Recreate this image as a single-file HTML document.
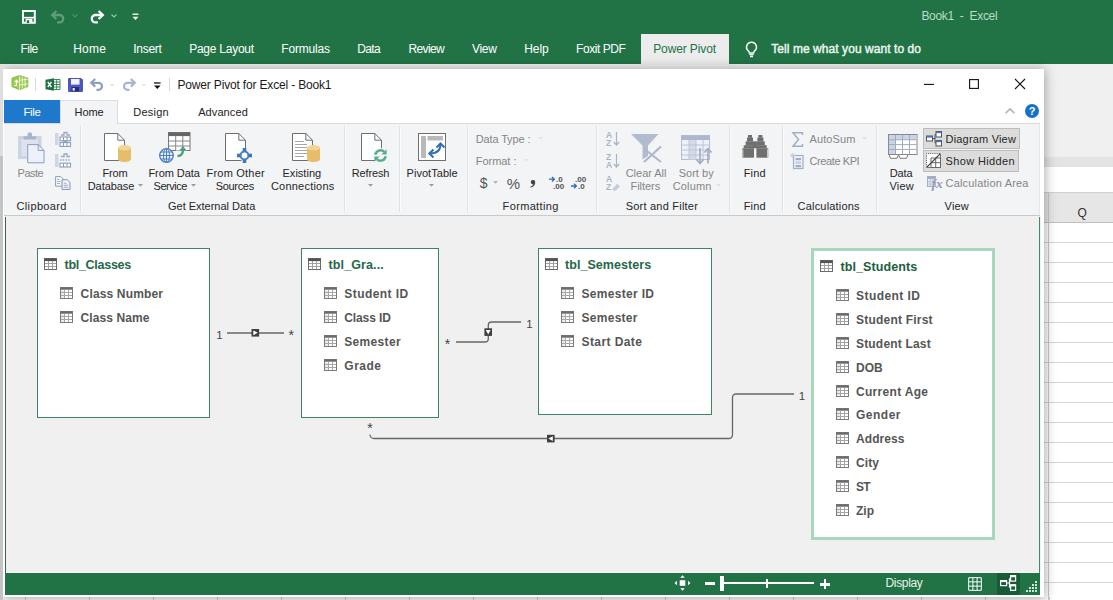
<!DOCTYPE html>
<html><head><meta charset="utf-8"><title>Power Pivot for Excel - Book1</title>
<style>
*{box-sizing:border-box;margin:0;padding:0}
html,body{width:1113px;height:600px;overflow:hidden;background:#fff}
body{position:relative;font-family:"Liberation Sans",sans-serif;font-size:12px;color:#262626}
.a{position:absolute}
.t{position:absolute;white-space:pre}
svg{position:absolute;overflow:visible}
</style></head>
<body>
<div class="a" style="left:0px;top:0px;width:1113px;height:64px;background:#217346;"></div><div class="a" style="left:0px;top:64px;width:1113px;height:93px;background:#f0f0f0;"></div><div class="a" style="left:0px;top:157px;width:1113px;height:10px;background:#e3e3e3;"></div><div class="a" style="left:0px;top:167px;width:1113px;height:25px;background:#ffffff;"></div><div class="a" style="left:0px;top:192px;width:1113px;height:31px;background:#e6e6e6;border-top:1px solid #d0d0d0;border-bottom:1px solid #bfbfbf"></div><div class="a" style="left:0;top:242px;width:1113px;height:1px;background:#d6d6d6"></div><div class="a" style="left:0;top:262px;width:1113px;height:1px;background:#d6d6d6"></div><div class="a" style="left:0;top:282px;width:1113px;height:1px;background:#d6d6d6"></div><div class="a" style="left:0;top:302px;width:1113px;height:1px;background:#d6d6d6"></div><div class="a" style="left:0;top:322px;width:1113px;height:1px;background:#d6d6d6"></div><div class="a" style="left:0;top:342px;width:1113px;height:1px;background:#d6d6d6"></div><div class="a" style="left:0;top:362px;width:1113px;height:1px;background:#d6d6d6"></div><div class="a" style="left:0;top:382px;width:1113px;height:1px;background:#d6d6d6"></div><div class="a" style="left:0;top:402px;width:1113px;height:1px;background:#d6d6d6"></div><div class="a" style="left:0;top:422px;width:1113px;height:1px;background:#d6d6d6"></div><div class="a" style="left:0;top:442px;width:1113px;height:1px;background:#d6d6d6"></div><div class="a" style="left:0;top:462px;width:1113px;height:1px;background:#d6d6d6"></div><div class="a" style="left:0;top:482px;width:1113px;height:1px;background:#d6d6d6"></div><div class="a" style="left:0;top:502px;width:1113px;height:1px;background:#d6d6d6"></div><div class="a" style="left:0;top:522px;width:1113px;height:1px;background:#d6d6d6"></div><div class="a" style="left:0;top:542px;width:1113px;height:1px;background:#d6d6d6"></div><div class="a" style="left:0;top:562px;width:1113px;height:1px;background:#d6d6d6"></div><div class="a" style="left:0;top:582px;width:1113px;height:1px;background:#d6d6d6"></div><div class="a" style="left:1048px;top:192px;width:1px;height:408px;background:#c9c9c9;"></div><div class="a" style="left:25px;top:597px;width:1px;height:3px;background:#cfcfcf;"></div><div class="a" style="left:89px;top:597px;width:1px;height:3px;background:#cfcfcf;"></div><div class="a" style="left:153px;top:597px;width:1px;height:3px;background:#cfcfcf;"></div><div class="a" style="left:217px;top:597px;width:1px;height:3px;background:#cfcfcf;"></div><div class="a" style="left:281px;top:597px;width:1px;height:3px;background:#cfcfcf;"></div><div class="a" style="left:345px;top:597px;width:1px;height:3px;background:#cfcfcf;"></div><div class="a" style="left:409px;top:597px;width:1px;height:3px;background:#cfcfcf;"></div><div class="a" style="left:473px;top:597px;width:1px;height:3px;background:#cfcfcf;"></div><div class="a" style="left:537px;top:597px;width:1px;height:3px;background:#cfcfcf;"></div><div class="a" style="left:601px;top:597px;width:1px;height:3px;background:#cfcfcf;"></div><div class="a" style="left:665px;top:597px;width:1px;height:3px;background:#cfcfcf;"></div><div class="a" style="left:729px;top:597px;width:1px;height:3px;background:#cfcfcf;"></div><div class="a" style="left:793px;top:597px;width:1px;height:3px;background:#cfcfcf;"></div><div class="a" style="left:857px;top:597px;width:1px;height:3px;background:#cfcfcf;"></div><div class="a" style="left:921px;top:597px;width:1px;height:3px;background:#cfcfcf;"></div><div class="a" style="left:985px;top:597px;width:1px;height:3px;background:#cfcfcf;"></div><div class="a" style="left:1049px;top:597px;width:1px;height:3px;background:#cfcfcf;"></div><div class="a" style="left:641px;top:34px;width:88px;height:31px;background:#ececec;"></div><svg style="left:22px;top:10px" width="14" height="14" viewBox="0 0 14 14"><path d="M1 1h11.800v11.800H1z" fill="none" stroke="#fff" stroke-width="2"/><path d="M1 7.600h11.800" stroke="#fff" stroke-width="1.500"/><rect x="3.600" y="8.600" width="6.800" height="4.200" fill="#fff"/><rect x="4.800" y="10.200" width="2.400" height="2.800" fill="#217346"/></svg><svg style="left:50px;top:10px" width="16" height="14" viewBox="0 0 16 14"><path d="M2.200 5h7.300a3.700 3.700 0 0 1 0 7.400H7.200" fill="none" stroke="#5f9d7c" stroke-width="2.300"/><path d="M6.400 1 2.200 5l4.200 4" fill="none" stroke="#5f9d7c" stroke-width="2.300"/></svg><svg style="left:72px;top:14px" width="6" height="4" viewBox="0 0 6 4"><path d="M.5.5 3 3 5.500.5" fill="none" stroke="#4f8f6d" stroke-width="1.100"/></svg><svg style="left:89px;top:10px" width="16" height="14" viewBox="0 0 16 14"><path d="M13.800 5H6.500a3.700 3.700 0 0 0 0 7.400h2.300" fill="none" stroke="#fff" stroke-width="2.300"/><path d="M9.600 1l4.200 4-4.200 4" fill="none" stroke="#fff" stroke-width="2.300"/></svg><svg style="left:111px;top:14px" width="6" height="4" viewBox="0 0 6 4"><path d="M.5.5 3 3 5.500.5" fill="none" stroke="#9cc4ad" stroke-width="1.100"/></svg><svg style="left:132px;top:13px" width="7" height="8" viewBox="0 0 7 8"><path d="M.5 1.2h6" stroke="#fff" stroke-width="1.3"/><path d="M.5 3.8h6L3.5 7z" fill="#fff"/></svg><svg style="left:745px;top:41px" width="13" height="17" viewBox="0 0 13 17"><path d="M6.5 1.2a4.9 4.9 0 0 0-3 8.8c.6.6.9 1.2.9 2h4.2c0-.8.3-1.4.9-2a4.9 4.9 0 0 0-3-8.800z" fill="none" stroke="#fff" stroke-width="1.500"/><path d="M4.400 13.600h4.200M5 15.500h3" stroke="#fff" stroke-width="1.300"/></svg><div class="a" style="left:3px;top:69px;width:1041px;height:528px;background:#fff;box-shadow:0 1px 11px 1px rgba(0,0,0,.34)"></div><div class="a" style="left:0px;top:64px;width:3px;height:92px;background:#dedede;"></div><div class="a" style="left:0px;top:156px;width:3px;height:444px;background:#c4c4c4;"></div><div class="a" style="left:4px;top:100px;width:56px;height:23px;background:#1e78cc;"></div><div class="a" style="left:60px;top:100px;width:58px;height:24px;background:#f3f4f6;border:1px solid #dcdde0;border-bottom:none"></div><div class="a" style="left:4px;top:123px;width:1036px;height:93px;background:#f3f4f6;border-top:1px solid #d9dadc;border-bottom:1px solid #c9cacc"></div><div class="a" style="left:4px;top:123px;width:56px;height:1px;background:#d9dadc;"></div><div class="a" style="left:61px;top:123px;width:56px;height:1px;background:#f3f4f6;"></div><div class="a" style="left:5px;top:216px;width:1036px;height:356px;background:#f0f0f0;"></div><div class="a" style="left:5px;top:572px;width:1035px;height:1px;background:#f2f8f4;"></div><div class="a" style="left:5px;top:217px;width:1px;height:356px;background:#3a5f4e;"></div><div class="a" style="left:1039px;top:217px;width:1px;height:356px;background:#3d8a63;"></div><div class="a" style="left:5px;top:573px;width:1035px;height:22px;background:#217346;"></div><div class="a" style="left:997px;top:573px;width:23px;height:22px;background:#185c37;"></div><div class="a" style="left:80px;top:126px;width:1px;height:86px;background:#e1e2e5;"></div><div class="a" style="left:81px;top:126px;width:1px;height:86px;background:#f9fafb;"></div><div class="a" style="left:344px;top:126px;width:1px;height:86px;background:#e1e2e5;"></div><div class="a" style="left:345px;top:126px;width:1px;height:86px;background:#f9fafb;"></div><div class="a" style="left:399px;top:126px;width:1px;height:86px;background:#e1e2e5;"></div><div class="a" style="left:400px;top:126px;width:1px;height:86px;background:#f9fafb;"></div><div class="a" style="left:467px;top:126px;width:1px;height:86px;background:#e1e2e5;"></div><div class="a" style="left:468px;top:126px;width:1px;height:86px;background:#f9fafb;"></div><div class="a" style="left:596px;top:126px;width:1px;height:86px;background:#e1e2e5;"></div><div class="a" style="left:597px;top:126px;width:1px;height:86px;background:#f9fafb;"></div><div class="a" style="left:729px;top:126px;width:1px;height:86px;background:#e1e2e5;"></div><div class="a" style="left:730px;top:126px;width:1px;height:86px;background:#f9fafb;"></div><div class="a" style="left:782px;top:126px;width:1px;height:86px;background:#e1e2e5;"></div><div class="a" style="left:783px;top:126px;width:1px;height:86px;background:#f9fafb;"></div><div class="a" style="left:876px;top:126px;width:1px;height:86px;background:#e1e2e5;"></div><div class="a" style="left:877px;top:126px;width:1px;height:86px;background:#f9fafb;"></div><div class="a" style="left:1039px;top:124px;width:1px;height:91px;background:#e6e7e9;"></div><svg style="left:924px;top:78px" width="11" height="11" viewBox="0 0 11 11"><path d="M0 6.4h10" stroke="#111" stroke-width="1.1"/></svg><svg style="left:969px;top:79px" width="10" height="10" viewBox="0 0 10 10"><rect x=".6" y=".6" width="8.8" height="8.8" fill="none" stroke="#111" stroke-width="1.1"/></svg><svg style="left:1015px;top:79px" width="10" height="10" viewBox="0 0 10 10"><path d="M0 0l10 10M10 0L0 10" stroke="#111" stroke-width="1.1"/></svg><svg style="left:1005px;top:108px" width="10" height="6" viewBox="0 0 10 6"><path d="M.6 5.2 5 .9l4.400 4.300" fill="none" stroke="#b2b2b2" stroke-width="1.600"/></svg><div class="a" style="left:1025px;top:104px;width:14px;height:14px;border-radius:7px;background:#1672c4;color:#fff;font:700 11px/14px 'Liberation Sans',sans-serif;text-align:center">?</div><svg style="left:11px;top:75px" width="18" height="15" viewBox="0 0 18 15"><path d="M8.500 .5 16.800 3.200v8.400L8.500 14.500 1 11.600V3.200z" fill="#9ccc50" stroke="#7ab532" stroke-width=".9"/><path d="M8.500 .5v14" stroke="#e8f5d0" stroke-width=".9"/><path d="M8.500 5.200l8.300-1M8.500 9.800l8.300-.8M11.300 1.500v12M14.100 2.400v10.200" stroke="#f3fae6" stroke-width=".9" fill="none"/><path d="M3.300 10.500h2.200V5.500M3.800 7.200l1.700-1.900 1.700 1.900" stroke="#fff" stroke-width="1.200" fill="none"/></svg><div class="a" style="left:35px;top:78px;width:1px;height:13px;background:#d8d8d8;"></div><svg style="left:45px;top:78px" width="16" height="13" viewBox="0 0 16 13"><path d="M7.500 1.500h7.500v10H7.500z" fill="#fff" stroke="#2a7a4b" stroke-width=".9"/><path d="M9 4h6M9 6.500h6M9 9h6M11.700 1.500v10" stroke="#2a7a4b" stroke-width=".9"/><path d="M.5 1.800 9 .2v12.600L.5 11.200z" fill="#1f7244"/><path d="M2.800 4l3.600 5M6.400 4 2.800 9" stroke="#fff" stroke-width="1.300"/></svg><svg style="left:68px;top:78px" width="15" height="14" viewBox="0 0 15 14"><path d="M.6.600h12.600l1.200 1.200v11.600H.6z" fill="#4f58c2" stroke="#3a41a6" stroke-width=".9"/><rect x="3" y="1" width="8.500" height="5.600" fill="#f2f4fc"/><rect x="3.600" y="9" width="7.400" height="4.400" fill="#252b78"/><rect x="4.600" y="10" width="2.200" height="2.600" fill="#e8ebf8"/></svg><svg style="left:89px;top:78px" width="16" height="13" viewBox="0 0 16 13"><path d="M2.200 4.800h7.300a3.500 3.500 0 0 1 0 7h-2" fill="none" stroke="#8e9fc2" stroke-width="2.200"/><path d="M6.200 1 2.200 4.800l4 3.800" fill="none" stroke="#8e9fc2" stroke-width="2.200"/></svg><svg style="left:110px;top:84px" width="4" height="3" viewBox="0 0 4 3"><path d="M0 0h4L2 2.500z" fill="#d9dce3"/></svg><svg style="left:121px;top:78px" width="16" height="13" viewBox="0 0 16 13"><path d="M13.800 4.800H6.500a3.500 3.500 0 0 0 0 7h2" fill="none" stroke="#a9b5ce" stroke-width="2.200"/><path d="M9.800 1l4 3.800-4 3.800" fill="none" stroke="#a9b5ce" stroke-width="2.200"/></svg><svg style="left:142px;top:84px" width="4" height="3" viewBox="0 0 4 3"><path d="M0 0h4L2 2.500z" fill="#e1e3e8"/></svg><svg style="left:154px;top:82px" width="7" height="8" viewBox="0 0 7 8"><path d="M0 1h6.600" stroke="#111" stroke-width="1.300"/><path d="M0 3.400h6.600L3.300 7z" fill="#111"/></svg><div class="a" style="left:169px;top:78px;width:1px;height:13px;background:#d8d8d8;"></div><svg style="left:18px;top:133px" width="27" height="31" viewBox="0 0 27 31"><rect x="0" y="3" width="23.500" height="23" fill="#cdd4e4"/><rect x="3.500" y="6" width="16.500" height="17" fill="#dde2ee"/><path d="M5.500 6.500V3.200h4V1.500a2.300 2.300 0 0 1 4.600 0v1.700h4v3.300z" fill="#a9b4cc"/><path d="M9.700 11.600h10.500l5.800 5.800v12.400H9.700z" fill="#edf1fb" stroke="#8d9dbc" stroke-width="1"/><path d="M20.200 11.600v5.800h5.800" fill="none" stroke="#8d9dbc" stroke-width="1"/></svg><svg style="left:55px;top:131px" width="16" height="16" viewBox="0 0 16 16"><rect x="0" y="2" width="3.500" height="12" fill="#cfd5e4"/><path d="M6 4h3V1.500h3V4h3" fill="none" stroke="#9aa8c4" stroke-width="1.300"/><rect x="5" y="6" width="10.500" height="3.800" fill="#fff" stroke="#8d9dbc" stroke-width="1.100"/><rect x="5" y="11.600" width="10.500" height="3.800" fill="#fff" stroke="#8d9dbc" stroke-width="1.100"/><path d="M8.500 6v3.800M12 6v3.800M8.500 11.600v3.800M12 11.600v3.800" stroke="#8d9dbc" stroke-width="1"/><path d="M7 9.800h6.500l-3.200 1.800z" fill="#8d9dbc"/></svg><svg style="left:55px;top:153px" width="16" height="15" viewBox="0 0 16 15"><rect x="0" y="1" width="3.500" height="13" fill="#cfd5e4"/><path d="M6 3.500h3V1h3v2.500h3" fill="none" stroke="#9aa8c4" stroke-width="1.300"/><path d="M5 7h10.500" stroke="#9aa8c4" stroke-width="1.300" stroke-dasharray="1.500 1.200"/><rect x="5" y="10.200" width="10.500" height="3.800" fill="#fff" stroke="#8d9dbc" stroke-width="1.100"/><path d="M8.500 10.200v3.800M12 10.200v3.800" stroke="#8d9dbc" stroke-width="1"/></svg><svg style="left:55px;top:176px" width="16" height="14" viewBox="0 0 16 14"><path d="M.6.600h5.200l2.200 2.200v7.400H.6z" fill="#f7f8fc" stroke="#8d9dbc" stroke-width="1"/><path d="M2 3.500h2.500M2 5.500h3.500M2 7.500h3" stroke="#9aa8c4" stroke-width=".9"/><path d="M7 3.800h5.400l2.600 2.600v7H7z" fill="#f7f8fc" stroke="#7f90b2" stroke-width="1"/><path d="M8.600 7.200h3M8.600 9.200h4.600M8.600 11.200h4.600" stroke="#8d9dbc" stroke-width=".9"/></svg><svg style="left:104px;top:133px" width="21" height="28" viewBox="0 0 21 28"><path d="M.5.5h13.300l6.700 6.700v20.300H.5z" fill="#fff" stroke="#6f6f6f" stroke-width="1"/><path d="M13.800.5v6.700h6.700" fill="none" stroke="#6f6f6f" stroke-width="1"/></svg><svg style="left:118px;top:145px" width="13" height="17" viewBox="0 0 13 17"><path d="M0 2.800v11.400c0 1.500 2.900 2.800 6.500 2.800s6.500-1.300 6.500-2.800V2.800z" fill="#e8bd6a"/><ellipse cx="6.500" cy="2.800" rx="6.500" ry="2.800" fill="#f3d596"/></svg><svg style="left:138px;top:184px" width="5" height="3" viewBox="0 0 5 3"><path d="M0 0h5L2.500 2.800z" fill="#9b9b9b"/></svg><svg style="left:168px;top:132px" width="23" height="19" viewBox="0 0 23 19"><rect x=".5" y=".5" width="21.500" height="18" fill="#fff" stroke="#777" stroke-width="1"/><rect x=".5" y=".5" width="21.500" height="3.600" fill="#666"/><path d="M.5 9h21.500M.5 14h21.500M7.700 4v14.500M14.800 4v14.500" stroke="#888" stroke-width="1"/></svg><svg style="left:176px;top:145px" width="12" height="12" viewBox="0 0 12 12"><rect x="0" y="5.500" width="11" height="6.500" fill="#f3f4f6"/><path d="M1.500 11c3.500 0 5.500-2 5.500-6.500" fill="none" stroke="#4a9f7e" stroke-width="2.300"/><path d="M3.200 5.800 7 1l3.800 4.800z" fill="#4a9f7e"/></svg><svg style="left:159px;top:148px" width="15" height="15" viewBox="0 0 15 15"><circle cx="7.500" cy="7.500" r="6.800" fill="#eaf2fb" stroke="#4a7fc0" stroke-width="1.300"/><ellipse cx="7.500" cy="7.500" rx="3" ry="6.800" fill="none" stroke="#4a7fc0" stroke-width="1"/><path d="M.7 7.500h13.600M1.800 4h11.400M1.800 11h11.400M7.500.7v13.600" stroke="#4a7fc0" stroke-width="1"/></svg><svg style="left:191px;top:184px" width="5" height="3" viewBox="0 0 5 3"><path d="M0 0h5L2.500 2.800z" fill="#9b9b9b"/></svg><svg style="left:225px;top:133px" width="21" height="28" viewBox="0 0 21 28"><path d="M.5.5h13.300l6.700 6.700v20.300H.5z" fill="#fff" stroke="#6f6f6f" stroke-width="1"/><path d="M13.800.5v6.700h6.700" fill="none" stroke="#6f6f6f" stroke-width="1"/></svg><svg style="left:237px;top:148px" width="15" height="15" viewBox="0 0 15 15"><circle cx="7.500" cy="7.500" r="6" fill="#f3f4f6"/><circle cx="7.500" cy="7.500" r="3.900" fill="#fff" stroke="#4a80c2" stroke-width="2"/><rect x="5.700" y="0" width="3.600" height="3.400" fill="#3d78bd"/><rect x="5.700" y="11.600" width="3.600" height="3.400" fill="#3d78bd"/><rect x="0" y="5.700" width="3.400" height="3.600" fill="#3d78bd"/><rect x="11.600" y="5.700" width="3.400" height="3.600" fill="#3d78bd"/></svg><svg style="left:292px;top:133px" width="21" height="28" viewBox="0 0 21 28"><path d="M.5.5h13.300l6.700 6.700v20.300H.5z" fill="#fff" stroke="#6f6f6f" stroke-width="1"/><path d="M13.800.5v6.700h6.700" fill="none" stroke="#6f6f6f" stroke-width="1"/><path d="M3 8.500h9M3 11.500h12M3 14.500h12M3 17.500h12M3 20.500h12M3 23.500h9" stroke="#a6a6a6" stroke-width="1"/></svg><svg style="left:307px;top:145px" width="13" height="17" viewBox="0 0 13 17"><path d="M0 2.800v11.400c0 1.500 2.900 2.800 6.500 2.800s6.500-1.300 6.500-2.800V2.800z" fill="#e8bd6a"/><ellipse cx="6.500" cy="2.800" rx="6.500" ry="2.800" fill="#f3d596"/></svg><svg style="left:361px;top:133px" width="21" height="28" viewBox="0 0 21 28"><path d="M.5.5h13.300l6.700 6.700v20.300H.5z" fill="#fff" stroke="#6f6f6f" stroke-width="1"/><path d="M13.800.5v6.700h6.700" fill="none" stroke="#6f6f6f" stroke-width="1"/></svg><svg style="left:373px;top:148px" width="15" height="15" viewBox="0 0 15 15"><circle cx="7.500" cy="7.500" r="7.400" fill="#f3f4f6"/><path d="M2.300 6.800a5.300 5.300 0 0 1 9-2.900" fill="none" stroke="#5aab8c" stroke-width="2.400"/><path d="M13.600 1.200v5.200H8.400z" fill="#5aab8c"/><path d="M12.700 8.200a5.300 5.300 0 0 1-9 2.900" fill="none" stroke="#5aab8c" stroke-width="2.400"/><path d="M1.400 13.800V8.600h5.200z" fill="#5aab8c"/></svg><svg style="left:368px;top:184px" width="5" height="3" viewBox="0 0 5 3"><path d="M0 0h5L2.500 2.800z" fill="#9b9b9b"/></svg><svg style="left:418px;top:133px" width="28" height="28" viewBox="0 0 28 28"><rect x=".5" y=".5" width="27" height="27" fill="#fff" stroke="#6f6f6f" stroke-width="1"/><rect x="3" y="3" width="5" height="22" fill="#b9b9b9"/><rect x="9.500" y="3" width="15.500" height="4.500" fill="#b9b9b9"/><path d="M12 20.500c7 0 10.500-3 10.500-9.500" fill="none" stroke="#2f6fb5" stroke-width="2"/><path d="M15.500 16.500 11.300 20.500l4.200 4M18.500 14.500l4-4 4 4" fill="none" stroke="#2f6fb5" stroke-width="2"/></svg><svg style="left:429px;top:184px" width="5" height="3" viewBox="0 0 5 3"><path d="M0 0h5L2.500 2.800z" fill="#9b9b9b"/></svg><svg style="left:538px;top:137px" width="5" height="3" viewBox="0 0 5 3"><path d="M0 0h5L2.500 2.800z" fill="#e3e5e9"/></svg><svg style="left:524px;top:159px" width="5" height="3" viewBox="0 0 5 3"><path d="M0 0h5L2.500 2.800z" fill="#e3e5e9"/></svg><svg style="left:493px;top:181px" width="5" height="3" viewBox="0 0 5 3"><path d="M0 0h5L2.500 2.800z" fill="#b5b5b5"/></svg><svg style="left:530px;top:180px" width="6" height="8" viewBox="0 0 6 8"><path d="M2.800 0a2.200 2.200 0 0 1 2.400 2.400C5.200 5 3.500 6.800.6 7.600L.3 6.800C2 6.200 2.900 5.400 3 4.300A2.100 2.100 0 0 1 .8 2.200 2 2 0 0 1 2.800 0z" fill="#444"/></svg><svg style="left:549px;top:176px" width="16" height="14" viewBox="0 0 16 14"><text x="7" y="6" font-family="Liberation Sans, sans-serif" font-size="8" font-weight="700" fill="#555">.0</text><text x="4" y="13" font-family="Liberation Sans, sans-serif" font-size="8" font-weight="700" fill="#555">.00</text><path d="M0 3.2h5M3 1.0l2.400 2.200-2.400 2.200" fill="none" stroke="#2f6fb5" stroke-width="1.300"/></svg><svg style="left:571px;top:176px" width="16" height="14" viewBox="0 0 16 14"><text x="4" y="6" font-family="Liberation Sans, sans-serif" font-size="8" font-weight="700" fill="#555">.00</text><text x="7" y="13" font-family="Liberation Sans, sans-serif" font-size="8" font-weight="700" fill="#555">.0</text><path d="M0 10h5M3 7.8l2.400 2.200-2.400 2.200" fill="none" stroke="#2f6fb5" stroke-width="1.300"/></svg><svg style="left:606px;top:131px" width="15" height="16" viewBox="0 0 15 16"><text x="0" y="7" font-family="Liberation Sans, sans-serif" font-size="8.500" font-weight="700" fill="#a9b3c9">A</text><text x="0" y="15" font-family="Liberation Sans, sans-serif" font-size="8.500" font-weight="700" fill="#a9b3c9">Z</text><path d="M10.500 1v13M7.800 11l2.700 3 2.700-3" fill="none" stroke="#a9b3c9" stroke-width="1.200"/></svg><svg style="left:606px;top:153px" width="15" height="16" viewBox="0 0 15 16"><text x="0" y="7" font-family="Liberation Sans, sans-serif" font-size="8.500" font-weight="700" fill="#a9b3c9">Z</text><text x="0" y="15" font-family="Liberation Sans, sans-serif" font-size="8.500" font-weight="700" fill="#a9b3c9">A</text><path d="M10.500 1v13M7.800 11l2.700 3 2.700-3" fill="none" stroke="#a9b3c9" stroke-width="1.200"/></svg><svg style="left:606px;top:175px" width="15" height="16" viewBox="0 0 15 16"><text x="0" y="7" font-family="Liberation Sans, sans-serif" font-size="8.500" font-weight="700" fill="#a9b3c9">A</text><text x="0" y="15" font-family="Liberation Sans, sans-serif" font-size="8.500" font-weight="700" fill="#a9b3c9">Z</text><path d="M6 14.500 11 9l3 2.500-5 4.500z" fill="#c3cadb"/></svg><svg style="left:631px;top:134px" width="32" height="29" viewBox="0 0 32 29"><path d="M0 0h27.500L17 11.500V22l-5.500 3.500V11.500z" fill="#b3bccf"/><path d="M14 15.500 30 28M30 12.500 13 28" stroke="#aeb7cc" stroke-width="2.200"/></svg><svg style="left:681px;top:135px" width="32" height="29" viewBox="0 0 32 29"><rect x=".5" y=".5" width="28" height="24" fill="#eef1f7" stroke="#b5bdd0"/><rect x=".5" y=".5" width="28" height="4.500" fill="#aeb7cc"/><rect x="8" y="5" width="7" height="19.500" fill="#d5dae6"/><path d="M.5 10h28M.5 15h28M.5 20h28M8 5v19.500M15 5v19.500M22 5v19.500" stroke="#bcc4d6" stroke-width="1"/><path d="M19 13v15M15.500 24.500 19 28.500l3.500-4M27 28.500v-15M23.500 17.500 27 13.500l3.500 4" fill="none" stroke="#a3adc4" stroke-width="1.700"/></svg><svg style="left:716px;top:184px" width="5" height="3" viewBox="0 0 5 3"><path d="M0 0h5L2.500 2.800z" fill="#e0e2e6"/></svg><svg style="left:742px;top:135px" width="27" height="23" viewBox="0 0 27 23"><g fill="#6f6f6f"><rect x="6" y="0" width="4" height="2.800"/><rect x="5" y="2.600" width="6" height="4"/><rect x="3.600" y="6.400" width="8.400" height="4"/><rect x="1.700" y="10.200" width="10.300" height="3.300"/><rect x=".2" y="13.300" width="11.800" height="9.400"/><rect x="16.400" y="0" width="4" height="2.800"/><rect x="15.400" y="2.600" width="6" height="4"/><rect x="14.400" y="6.400" width="8.400" height="4"/><rect x="14.400" y="10.200" width="10.300" height="3.300"/><rect x="14.400" y="13.300" width="11.800" height="9.400"/><rect x="11.500" y="6.400" width="3.400" height="6.900"/></g><rect x=".2" y="14.300" width="1.200" height="8.400" fill="#c9c9c9"/><rect x="25" y="14.300" width="1.200" height="8.400" fill="#c9c9c9"/></svg><svg style="left:792px;top:132px" width="12" height="15" viewBox="0 0 12 15"><path d="M10.500 3V.8H1L6.500 7.500 1 14.200h9.500V12" fill="none" stroke="#a3adc4" stroke-width="1.500"/></svg><svg style="left:862px;top:137px" width="5" height="3" viewBox="0 0 5 3"><path d="M0 0h5L2.500 2.800z" fill="#e0e2e6"/></svg><svg style="left:790px;top:153px" width="14" height="16" viewBox="0 0 14 16"><rect x="3.500" y="2.500" width="9.500" height="13" fill="#eef1f7" stroke="#a3adc4" stroke-width="1.200"/><rect x="5.500" y="5" width="5.500" height="2.200" fill="#a3adc4"/><rect x="5.500" y="8.500" width="5.500" height="2.200" fill="#c3cadb"/><rect x="5.500" y="12" width="5.500" height="2.200" fill="#a3adc4"/><path d="M2.500 0v5M0 2.500h5M.7.700l3.600 3.600M4.300.7.700 4.300" stroke="#c3cadb" stroke-width=".8"/></svg><svg style="left:888px;top:134px" width="30" height="25" viewBox="0 0 30 25"><path d="M1 20.500h9.500l-1.500 3.800H2.500zM10.500 20.500h9.500l-1.500 3.800H12z" fill="#fff" stroke="#7b7b7b" stroke-width="1"/><rect x=".5" y=".5" width="28.500" height="20" fill="#fff" stroke="#8a8a8a" stroke-width="1"/><rect x="1" y="1" width="27.500" height="4.800" fill="#c9d5e6"/><rect x="1" y="5.500" width="6.500" height="14.500" fill="#c9d5e6"/><path d="M1 5.800h27.500M1 10.600h27.500M1 15.400h27.500M7.500 1v19M14.500 1v19M21.500 1v19" stroke="#a3abb8" stroke-width="1"/></svg><div class="a" style="left:923px;top:128px;width:97px;height:21px;background:#dcdcdc;border:1px solid #bdbdbd"></div><div class="a" style="left:923px;top:150px;width:96px;height:22px;background:#dcdcdc;border:1px solid #bdbdbd"></div><svg style="left:926px;top:131px" width="16" height="16" viewBox="0 0 16 16"><path d="M6.500 7.500h2.500M9 3.500v8.500M9 3.500h2M9 12h2" fill="none" stroke="#555" stroke-width="1"/><rect x=".5" y="5" width="6" height="5" fill="#fff" stroke="#555"/><rect x=".5" y="5" width="6" height="1.600" fill="#3d78bd"/><rect x="10" y=".5" width="5.500" height="5.500" fill="#fff" stroke="#555"/><rect x="10" y=".5" width="5.500" height="1.600" fill="#3d78bd"/><rect x="10" y="9.500" width="5.500" height="5.500" fill="#fff" stroke="#555"/><rect x="10" y="9.500" width="5.500" height="1.600" fill="#3d78bd"/></svg><svg style="left:926px;top:153px" width="15" height="15" viewBox="0 0 15 15"><rect x=".5" y=".5" width="14" height="14" fill="#fff" stroke="none"/><path d="M.5 14.500V.5H14.500" fill="none" stroke="#555" stroke-dasharray="1 1.200"/><path d="M.5 14.500H14.500V.5" fill="none" stroke="#777"/><path d="M5 5h9.500v9.500H5zM5 9.700h9.500M9.700 5v9.500" fill="none" stroke="#666" stroke-width="1"/><path d="M1 14 14 1" stroke="#444" stroke-width="1.100"/></svg><svg style="left:927px;top:176px" width="15" height="14" viewBox="0 0 15 14"><rect x=".5" y=".5" width="8" height="10" fill="#e5e9f2" stroke="#a3adc4"/><rect x=".5" y=".5" width="8" height="2.500" fill="#a3adc4"/><path d="M.500 5.500h8M.500 8h8M3.200 3v7.500M5.800 3v7.500" stroke="#b7bfd1" stroke-width=".8"/><text x="4.500" y="12" font-family="Liberation Serif, serif" font-style="italic" font-weight="700" font-size="13.500" fill="#8f9bb8" stroke="#f3f4f6" stroke-width=".4" paint-order="stroke">fx</text></svg><div class="a" style="left:37px;top:248px;width:173px;height:170px;background:#fff;border:1px solid #3c8560"></div><svg style="left:44px;top:258px" width="13" height="12" viewBox="0 0 13 12"><rect x=".5" y=".5" width="12" height="11" fill="#fff" stroke="#6b6b6b"/><rect x=".5" y=".5" width="12" height="2.600" fill="#555"/><path d="M1 5.500h11M1 8.500h11M4.500 3v8M8.500 3v8" stroke="#a2a2a2" stroke-width="1"/></svg><svg style="left:59.7px;top:287px" width="13" height="12" viewBox="0 0 13 12"><rect x=".5" y=".5" width="12" height="11" fill="#fff" stroke="#7a7a7a"/><rect x=".5" y=".5" width="12" height="2.200" fill="#6a6a6a"/><rect x="1" y="3" width="3" height="8" fill="#ececec"/><path d="M1 5.500h11M1 8.500h11M4.500 3v8M8.500 3v8" stroke="#a6a6a6" stroke-width="1"/></svg><svg style="left:59.7px;top:311px" width="13" height="12" viewBox="0 0 13 12"><rect x=".5" y=".5" width="12" height="11" fill="#fff" stroke="#7a7a7a"/><rect x=".5" y=".5" width="12" height="2.200" fill="#6a6a6a"/><rect x="1" y="3" width="3" height="8" fill="#ececec"/><path d="M1 5.500h11M1 8.500h11M4.500 3v8M8.500 3v8" stroke="#a6a6a6" stroke-width="1"/></svg><div class="a" style="left:301px;top:248px;width:138px;height:170px;background:#fff;border:1px solid #3c8560"></div><svg style="left:307.5px;top:258px" width="13" height="12" viewBox="0 0 13 12"><rect x=".5" y=".5" width="12" height="11" fill="#fff" stroke="#6b6b6b"/><rect x=".5" y=".5" width="12" height="2.600" fill="#555"/><path d="M1 5.500h11M1 8.500h11M4.500 3v8M8.500 3v8" stroke="#a2a2a2" stroke-width="1"/></svg><svg style="left:324px;top:287px" width="13" height="12" viewBox="0 0 13 12"><rect x=".5" y=".5" width="12" height="11" fill="#fff" stroke="#7a7a7a"/><rect x=".5" y=".5" width="12" height="2.200" fill="#6a6a6a"/><rect x="1" y="3" width="3" height="8" fill="#ececec"/><path d="M1 5.500h11M1 8.500h11M4.500 3v8M8.500 3v8" stroke="#a6a6a6" stroke-width="1"/></svg><svg style="left:324px;top:311px" width="13" height="12" viewBox="0 0 13 12"><rect x=".5" y=".5" width="12" height="11" fill="#fff" stroke="#7a7a7a"/><rect x=".5" y=".5" width="12" height="2.200" fill="#6a6a6a"/><rect x="1" y="3" width="3" height="8" fill="#ececec"/><path d="M1 5.500h11M1 8.500h11M4.500 3v8M8.500 3v8" stroke="#a6a6a6" stroke-width="1"/></svg><svg style="left:324px;top:335px" width="13" height="12" viewBox="0 0 13 12"><rect x=".5" y=".5" width="12" height="11" fill="#fff" stroke="#7a7a7a"/><rect x=".5" y=".5" width="12" height="2.200" fill="#6a6a6a"/><rect x="1" y="3" width="3" height="8" fill="#ececec"/><path d="M1 5.500h11M1 8.500h11M4.500 3v8M8.500 3v8" stroke="#a6a6a6" stroke-width="1"/></svg><svg style="left:324px;top:359px" width="13" height="12" viewBox="0 0 13 12"><rect x=".5" y=".5" width="12" height="11" fill="#fff" stroke="#7a7a7a"/><rect x=".5" y=".5" width="12" height="2.200" fill="#6a6a6a"/><rect x="1" y="3" width="3" height="8" fill="#ececec"/><path d="M1 5.500h11M1 8.500h11M4.500 3v8M8.500 3v8" stroke="#a6a6a6" stroke-width="1"/></svg><div class="a" style="left:538px;top:248px;width:174px;height:167px;background:#fff;border:1px solid #3c8560"></div><svg style="left:545px;top:258px" width="13" height="12" viewBox="0 0 13 12"><rect x=".5" y=".5" width="12" height="11" fill="#fff" stroke="#6b6b6b"/><rect x=".5" y=".5" width="12" height="2.600" fill="#555"/><path d="M1 5.500h11M1 8.500h11M4.500 3v8M8.500 3v8" stroke="#a2a2a2" stroke-width="1"/></svg><svg style="left:560.8px;top:287px" width="13" height="12" viewBox="0 0 13 12"><rect x=".5" y=".5" width="12" height="11" fill="#fff" stroke="#7a7a7a"/><rect x=".5" y=".5" width="12" height="2.200" fill="#6a6a6a"/><rect x="1" y="3" width="3" height="8" fill="#ececec"/><path d="M1 5.500h11M1 8.500h11M4.500 3v8M8.500 3v8" stroke="#a6a6a6" stroke-width="1"/></svg><svg style="left:560.8px;top:311px" width="13" height="12" viewBox="0 0 13 12"><rect x=".5" y=".5" width="12" height="11" fill="#fff" stroke="#7a7a7a"/><rect x=".5" y=".5" width="12" height="2.200" fill="#6a6a6a"/><rect x="1" y="3" width="3" height="8" fill="#ececec"/><path d="M1 5.500h11M1 8.500h11M4.500 3v8M8.500 3v8" stroke="#a6a6a6" stroke-width="1"/></svg><svg style="left:560.8px;top:335px" width="13" height="12" viewBox="0 0 13 12"><rect x=".5" y=".5" width="12" height="11" fill="#fff" stroke="#7a7a7a"/><rect x=".5" y=".5" width="12" height="2.200" fill="#6a6a6a"/><rect x="1" y="3" width="3" height="8" fill="#ececec"/><path d="M1 5.500h11M1 8.500h11M4.500 3v8M8.500 3v8" stroke="#a6a6a6" stroke-width="1"/></svg><div class="a" style="left:811px;top:248px;width:184px;height:292px;background:#fff;border:3px solid #a7d7bc"></div><svg style="left:820px;top:260px" width="13" height="12" viewBox="0 0 13 12"><rect x=".5" y=".5" width="12" height="11" fill="#fff" stroke="#6b6b6b"/><rect x=".5" y=".5" width="12" height="2.600" fill="#555"/><path d="M1 5.500h11M1 8.500h11M4.500 3v8M8.500 3v8" stroke="#a2a2a2" stroke-width="1"/></svg><svg style="left:836px;top:289px" width="13" height="12" viewBox="0 0 13 12"><rect x=".5" y=".5" width="12" height="11" fill="#fff" stroke="#7a7a7a"/><rect x=".5" y=".5" width="12" height="2.200" fill="#6a6a6a"/><rect x="1" y="3" width="3" height="8" fill="#ececec"/><path d="M1 5.500h11M1 8.500h11M4.500 3v8M8.500 3v8" stroke="#a6a6a6" stroke-width="1"/></svg><svg style="left:836px;top:313px" width="13" height="12" viewBox="0 0 13 12"><rect x=".5" y=".5" width="12" height="11" fill="#fff" stroke="#7a7a7a"/><rect x=".5" y=".5" width="12" height="2.200" fill="#6a6a6a"/><rect x="1" y="3" width="3" height="8" fill="#ececec"/><path d="M1 5.500h11M1 8.500h11M4.500 3v8M8.500 3v8" stroke="#a6a6a6" stroke-width="1"/></svg><svg style="left:836px;top:337px" width="13" height="12" viewBox="0 0 13 12"><rect x=".5" y=".5" width="12" height="11" fill="#fff" stroke="#7a7a7a"/><rect x=".5" y=".5" width="12" height="2.200" fill="#6a6a6a"/><rect x="1" y="3" width="3" height="8" fill="#ececec"/><path d="M1 5.500h11M1 8.500h11M4.500 3v8M8.500 3v8" stroke="#a6a6a6" stroke-width="1"/></svg><svg style="left:836px;top:361px" width="13" height="12" viewBox="0 0 13 12"><rect x=".5" y=".5" width="12" height="11" fill="#fff" stroke="#7a7a7a"/><rect x=".5" y=".5" width="12" height="2.200" fill="#6a6a6a"/><rect x="1" y="3" width="3" height="8" fill="#ececec"/><path d="M1 5.500h11M1 8.500h11M4.500 3v8M8.500 3v8" stroke="#a6a6a6" stroke-width="1"/></svg><svg style="left:836px;top:385px" width="13" height="12" viewBox="0 0 13 12"><rect x=".5" y=".5" width="12" height="11" fill="#fff" stroke="#7a7a7a"/><rect x=".5" y=".5" width="12" height="2.200" fill="#6a6a6a"/><rect x="1" y="3" width="3" height="8" fill="#ececec"/><path d="M1 5.500h11M1 8.500h11M4.500 3v8M8.500 3v8" stroke="#a6a6a6" stroke-width="1"/></svg><svg style="left:836px;top:408px" width="13" height="12" viewBox="0 0 13 12"><rect x=".5" y=".5" width="12" height="11" fill="#fff" stroke="#7a7a7a"/><rect x=".5" y=".5" width="12" height="2.200" fill="#6a6a6a"/><rect x="1" y="3" width="3" height="8" fill="#ececec"/><path d="M1 5.500h11M1 8.500h11M4.500 3v8M8.500 3v8" stroke="#a6a6a6" stroke-width="1"/></svg><svg style="left:836px;top:432px" width="13" height="12" viewBox="0 0 13 12"><rect x=".5" y=".5" width="12" height="11" fill="#fff" stroke="#7a7a7a"/><rect x=".5" y=".5" width="12" height="2.200" fill="#6a6a6a"/><rect x="1" y="3" width="3" height="8" fill="#ececec"/><path d="M1 5.500h11M1 8.500h11M4.500 3v8M8.500 3v8" stroke="#a6a6a6" stroke-width="1"/></svg><svg style="left:836px;top:456px" width="13" height="12" viewBox="0 0 13 12"><rect x=".5" y=".5" width="12" height="11" fill="#fff" stroke="#7a7a7a"/><rect x=".5" y=".5" width="12" height="2.200" fill="#6a6a6a"/><rect x="1" y="3" width="3" height="8" fill="#ececec"/><path d="M1 5.500h11M1 8.500h11M4.500 3v8M8.500 3v8" stroke="#a6a6a6" stroke-width="1"/></svg><svg style="left:836px;top:480px" width="13" height="12" viewBox="0 0 13 12"><rect x=".5" y=".5" width="12" height="11" fill="#fff" stroke="#7a7a7a"/><rect x=".5" y=".5" width="12" height="2.200" fill="#6a6a6a"/><rect x="1" y="3" width="3" height="8" fill="#ececec"/><path d="M1 5.500h11M1 8.500h11M4.500 3v8M8.500 3v8" stroke="#a6a6a6" stroke-width="1"/></svg><svg style="left:836px;top:504px" width="13" height="12" viewBox="0 0 13 12"><rect x=".5" y=".5" width="12" height="11" fill="#fff" stroke="#7a7a7a"/><rect x=".5" y=".5" width="12" height="2.200" fill="#6a6a6a"/><rect x="1" y="3" width="3" height="8" fill="#ececec"/><path d="M1 5.500h11M1 8.500h11M4.500 3v8M8.500 3v8" stroke="#a6a6a6" stroke-width="1"/></svg><svg style="left:0;top:0" width="1113" height="600" viewBox="0 0 1113 600"><g fill="none" stroke="#666" stroke-width="1.300"><path d="M227 333H284"/><path d="M456 342h29a3.300 3.300 0 0 0 3.300-3.300v-13.400a3.300 3.300 0 0 1 3.300-3.300H521"/><path d="M370 434.500a4 4 0 0 0 4 4H729a3.500 3.500 0 0 0 3.500-3.500V397.500a3.500 3.500 0 0 1 3.500-3.500H794"/></g><g><rect x="251.500" y="329" width="7.600" height="7.600" fill="#3f3f3f"/><path d="M253.300 330.400l4.400 2.400-4.400 2.400z" fill="#fff"/><rect x="484.400" y="328.300" width="7.600" height="7.600" fill="#3f3f3f"/><path d="M485.800 330.100h4.800l-2.400 4.400z" fill="#fff"/><rect x="547" y="434.800" width="7.600" height="7.600" fill="#3f3f3f"/><path d="M552.800 436.200l-4.400 2.400 4.400 2.400z" fill="#fff"/></g></svg><svg style="left:674px;top:575px" width="17" height="16" viewBox="0 0 17 16"><rect x="5.700" y="5.200" width="5.600" height="5.600" fill="#fff"/><path d="M6.300 2.800h4.400L8.500 .3zM6.300 13.200h4.400L8.500 15.700zM3 5.800v4.400L.5 8zM14 5.800v4.400L16.500 8z" fill="#fff"/></svg><div class="a" style="left:705px;top:582px;width:10px;height:2.5px;background:#fff;"></div><div class="a" style="left:720px;top:576px;width:4px;height:14.5px;background:#fff;"></div><div class="a" style="left:724px;top:582px;width:90px;height:2px;background:#fff;"></div><div class="a" style="left:766px;top:579px;width:2px;height:8.5px;background:#fff;"></div><div class="a" style="left:820px;top:583px;width:10px;height:2.5px;background:#fff;"></div><div class="a" style="left:823.7px;top:579.2px;width:2.5px;height:10px;background:#fff;"></div><svg style="left:968px;top:577px" width="14" height="14" viewBox="0 0 14 14"><path d="M.7.700h12.600v12.600H.7zM.7 4.900h12.600M.7 9.100h12.600M4.900.7v12.600M9.100.7v12.600" fill="none" stroke="#fff" stroke-width="1"/></svg><svg style="left:1000px;top:575px" width="16" height="16" viewBox="0 0 16 16"><path d="M6.500 8h3M9.500 3.500v9M9.500 3.500h1.500M9.500 12.500h1.500" fill="none" stroke="#fff" stroke-width="1.200"/><rect x=".6" y="5.600" width="6" height="5" fill="none" stroke="#fff" stroke-width="1.200"/><rect x=".6" y="5.300" width="6" height="1.800" fill="#fff"/><rect x="10.600" y=".6" width="5" height="5.500" fill="none" stroke="#fff" stroke-width="1.200"/><rect x="10.600" y=".4" width="5" height="1.800" fill="#fff"/><rect x="10.600" y="9.800" width="5" height="5.500" fill="none" stroke="#fff" stroke-width="1.200"/><rect x="10.600" y="9.600" width="5" height="1.800" fill="#fff"/></svg><svg style="left:1026px;top:581px" width="12" height="12" viewBox="0 0 12 12"><g fill="#cfe3d7"><rect x="9" y="0" width="2" height="2"/><rect x="6" y="3" width="2" height="2"/><rect x="9" y="3" width="2" height="2"/><rect x="3" y="6" width="2" height="2"/><rect x="6" y="6" width="2" height="2"/><rect x="9" y="6" width="2" height="2"/><rect x="0" y="9" width="2" height="2"/><rect x="3" y="9" width="2" height="2"/><rect x="6" y="9" width="2" height="2"/><rect x="9" y="9" width="2" height="2"/></g></svg><span class="t" style="left:20.6px;top:42px;font-size:12px;line-height:14px;height:14px;color:#ffffff;letter-spacing:-0.58px;">File</span><span class="t" style="left:73.2px;top:42px;font-size:12px;line-height:14px;height:14px;color:#ffffff;letter-spacing:0.23px;">Home</span><span class="t" style="left:133.3px;top:42px;font-size:12px;line-height:14px;height:14px;color:#ffffff;letter-spacing:-0.30px;">Insert</span><span class="t" style="left:189.2px;top:42px;font-size:12px;line-height:14px;height:14px;color:#ffffff;letter-spacing:-0.25px;">Page Layout</span><span class="t" style="left:281.3px;top:42px;font-size:12px;line-height:14px;height:14px;color:#ffffff;letter-spacing:-0.20px;">Formulas</span><span class="t" style="left:357.3px;top:42px;font-size:12px;line-height:14px;height:14px;color:#ffffff;letter-spacing:-0.65px;">Data</span><span class="t" style="left:408.6px;top:42px;font-size:12px;line-height:14px;height:14px;color:#ffffff;letter-spacing:-0.67px;">Review</span><span class="t" style="left:472.0px;top:42px;font-size:12px;line-height:14px;height:14px;color:#ffffff;letter-spacing:-0.30px;">View</span><span class="t" style="left:524.3px;top:42px;font-size:12px;line-height:14px;height:14px;color:#ffffff;letter-spacing:-0.10px;">Help</span><span class="t" style="left:576.0px;top:42px;font-size:12px;line-height:14px;height:14px;color:#ffffff;letter-spacing:-0.43px;">Foxit PDF</span><span class="t" style="left:653.2px;top:42px;font-size:12px;line-height:14px;height:14px;color:#217346;letter-spacing:-0.12px;">Power Pivot</span><span class="t" style="left:771.3px;top:42px;font-size:12px;line-height:14px;height:14px;color:#eef7f1;-webkit-text-stroke:.4px currentColor;letter-spacing:0.06px;">Tell me what you want to do</span><span class="t" style="left:921.4px;top:9px;font-size:12px;line-height:14px;height:14px;color:#b9dcc7;letter-spacing:-0.32px;">Book1  -  Excel</span><span class="t" style="left:1077.5px;top:206px;font-size:12px;line-height:14px;height:14px;color:#333;">Q</span><span class="t" style="left:177.5px;top:78px;font-size:12px;line-height:14px;height:14px;color:#1a1a1a;letter-spacing:-0.17px;">Power Pivot for Excel - Book1</span><span class="t" style="left:23.4px;top:106px;font-size:11.5px;line-height:12px;height:12px;color:#ffffff;letter-spacing:-0.31px;">File</span><span class="t" style="left:74.6px;top:106px;font-size:11px;line-height:12px;height:12px;color:#222;letter-spacing:-0.08px;">Home</span><span class="t" style="left:133.3px;top:106px;font-size:11px;line-height:12px;height:12px;color:#222;letter-spacing:0.21px;">Design</span><span class="t" style="left:198.2px;top:106px;font-size:11px;line-height:12px;height:12px;color:#222;letter-spacing:0.09px;">Advanced</span><span class="t" style="left:17.6px;top:167px;font-size:11px;line-height:12px;height:12px;color:#868686;letter-spacing:-0.51px;">Paste</span><span class="t" style="left:16.5px;top:200px;font-size:11px;line-height:12px;height:12px;color:#262626;letter-spacing:0.36px;">Clipboard</span><span class="t" style="left:102.4px;top:167px;font-size:11px;line-height:12px;height:12px;color:#262626;letter-spacing:-0.16px;">From</span><span class="t" style="left:87.7px;top:180px;font-size:11px;line-height:12px;height:12px;color:#262626;letter-spacing:-0.06px;">Database</span><span class="t" style="left:148.4px;top:167px;font-size:11px;line-height:12px;height:12px;color:#262626;letter-spacing:-0.05px;">From Data</span><span class="t" style="left:153.6px;top:180px;font-size:11px;line-height:12px;height:12px;color:#262626;letter-spacing:-0.48px;">Service</span><span class="t" style="left:206.5px;top:167px;font-size:11px;line-height:12px;height:12px;color:#262626;letter-spacing:0.21px;">From Other</span><span class="t" style="left:215.7px;top:180px;font-size:11px;line-height:12px;height:12px;color:#262626;letter-spacing:-0.31px;">Sources</span><span class="t" style="left:282.5px;top:167px;font-size:11px;line-height:12px;height:12px;color:#262626;letter-spacing:0.02px;">Existing</span><span class="t" style="left:270.9px;top:180px;font-size:11px;line-height:12px;height:12px;color:#262626;letter-spacing:0.22px;">Connections</span><span class="t" style="left:168.0px;top:200px;font-size:11px;line-height:12px;height:12px;color:#262626;letter-spacing:-0.01px;">Get External Data</span><span class="t" style="left:351.7px;top:167px;font-size:11px;line-height:12px;height:12px;color:#262626;letter-spacing:-0.14px;">Refresh</span><span class="t" style="left:406.5px;top:167px;font-size:11px;line-height:12px;height:12px;color:#262626;letter-spacing:0.05px;">PivotTable</span><span class="t" style="left:475.7px;top:133px;font-size:11px;line-height:12px;height:12px;color:#868686;letter-spacing:-0.13px;">Data Type :</span><span class="t" style="left:475.7px;top:155px;font-size:11px;line-height:12px;height:12px;color:#868686;letter-spacing:-0.02px;">Format :</span><span class="t" style="left:479.8px;top:175px;font-size:14px;line-height:16px;height:16px;color:#555;">$</span><span class="t" style="left:506.8px;top:175px;font-size:15px;line-height:17px;height:17px;color:#555;">%</span><span class="t" style="left:502.6px;top:200px;font-size:11px;line-height:12px;height:12px;color:#262626;letter-spacing:0.35px;">Formatting</span><span class="t" style="left:625.7px;top:167px;font-size:11px;line-height:12px;height:12px;color:#868686;letter-spacing:-0.02px;">Clear All</span><span class="t" style="left:630.5px;top:180px;font-size:11px;line-height:12px;height:12px;color:#868686;letter-spacing:-0.04px;">Filters</span><span class="t" style="left:678.7px;top:167px;font-size:11px;line-height:12px;height:12px;color:#868686;letter-spacing:0.02px;">Sort by</span><span class="t" style="left:672.7px;top:180px;font-size:11px;line-height:12px;height:12px;color:#868686;letter-spacing:0.16px;">Column</span><span class="t" style="left:625.7px;top:200px;font-size:11px;line-height:12px;height:12px;color:#262626;letter-spacing:0.22px;">Sort and Filter</span><span class="t" style="left:743.7px;top:167px;font-size:11px;line-height:12px;height:12px;color:#262626;letter-spacing:0.16px;">Find</span><span class="t" style="left:743.7px;top:200px;font-size:11px;line-height:12px;height:12px;color:#262626;letter-spacing:0.16px;">Find</span><span class="t" style="left:809.6px;top:133px;font-size:11px;line-height:12px;height:12px;color:#868686;letter-spacing:0.09px;">AutoSum</span><span class="t" style="left:809.6px;top:155px;font-size:11px;line-height:12px;height:12px;color:#868686;letter-spacing:-0.42px;">Create KPI</span><span class="t" style="left:797.6px;top:200px;font-size:11px;line-height:12px;height:12px;color:#262626;letter-spacing:0.19px;">Calculations</span><span class="t" style="left:889.8px;top:167px;font-size:11px;line-height:12px;height:12px;color:#262626;letter-spacing:-0.15px;">Data</span><span class="t" style="left:889.4px;top:180px;font-size:11px;line-height:12px;height:12px;color:#262626;letter-spacing:0.21px;">View</span><span class="t" style="left:945.5px;top:133px;font-size:11px;line-height:12px;height:12px;color:#262626;letter-spacing:0.19px;">Diagram View</span><span class="t" style="left:945.5px;top:155px;font-size:11px;line-height:12px;height:12px;color:#262626;letter-spacing:0.38px;">Show Hidden</span><span class="t" style="left:945.5px;top:177px;font-size:11px;line-height:12px;height:12px;color:#868686;letter-spacing:0.19px;">Calculation Area</span><span class="t" style="left:944.6px;top:200px;font-size:11px;line-height:12px;height:12px;color:#262626;letter-spacing:0.18px;">View</span><span class="t" style="left:64.5px;top:258px;font-size:12.5px;line-height:14px;height:14px;color:#25684a;font-weight:700;letter-spacing:-0.28px;">tbl_Classes</span><span class="t" style="left:80.6px;top:287px;font-size:12px;line-height:14px;height:14px;color:#555555;font-weight:700;letter-spacing:0.15px;">Class Number</span><span class="t" style="left:80.6px;top:311px;font-size:12px;line-height:14px;height:14px;color:#555555;font-weight:700;letter-spacing:0.09px;">Class Name</span><span class="t" style="left:328.5px;top:258px;font-size:12.5px;line-height:14px;height:14px;color:#25684a;font-weight:700;letter-spacing:0.12px;">tbl_Gra...</span><span class="t" style="left:344.3px;top:287px;font-size:12px;line-height:14px;height:14px;color:#555555;font-weight:700;letter-spacing:0.44px;">Student ID</span><span class="t" style="left:344.3px;top:311px;font-size:12px;line-height:14px;height:14px;color:#555555;font-weight:700;letter-spacing:-0.12px;">Class ID</span><span class="t" style="left:344.3px;top:335px;font-size:12px;line-height:14px;height:14px;color:#555555;font-weight:700;letter-spacing:0.32px;">Semester</span><span class="t" style="left:344.3px;top:359px;font-size:12px;line-height:14px;height:14px;color:#555555;font-weight:700;letter-spacing:0.50px;">Grade</span><span class="t" style="left:565.0px;top:258px;font-size:12.5px;line-height:14px;height:14px;color:#25684a;font-weight:700;letter-spacing:0.06px;">tbl_Semesters</span><span class="t" style="left:581.5px;top:287px;font-size:12px;line-height:14px;height:14px;color:#555555;font-weight:700;letter-spacing:0.31px;">Semester ID</span><span class="t" style="left:581.5px;top:311px;font-size:12px;line-height:14px;height:14px;color:#555555;font-weight:700;letter-spacing:0.28px;">Semester</span><span class="t" style="left:581.5px;top:335px;font-size:12px;line-height:14px;height:14px;color:#555555;font-weight:700;letter-spacing:0.42px;">Start Date</span><span class="t" style="left:840.5px;top:260px;font-size:12.5px;line-height:14px;height:14px;color:#1b5e3c;font-weight:700;letter-spacing:0.10px;">tbl_Students</span><span class="t" style="left:856.0px;top:289px;font-size:12px;line-height:14px;height:14px;color:#555555;font-weight:700;letter-spacing:0.44px;">Student ID</span><span class="t" style="left:856.0px;top:313px;font-size:12px;line-height:14px;height:14px;color:#555555;font-weight:700;letter-spacing:0.21px;">Student First</span><span class="t" style="left:856.0px;top:337px;font-size:12px;line-height:14px;height:14px;color:#555555;font-weight:700;letter-spacing:0.18px;">Student Last</span><span class="t" style="left:856.0px;top:361px;font-size:12px;line-height:14px;height:14px;color:#555555;font-weight:700;letter-spacing:-0.04px;">DOB</span><span class="t" style="left:856.0px;top:385px;font-size:12px;line-height:14px;height:14px;color:#555555;font-weight:700;letter-spacing:0.31px;">Current Age</span><span class="t" style="left:856.0px;top:408px;font-size:12px;line-height:14px;height:14px;color:#555555;font-weight:700;letter-spacing:0.50px;">Gender</span><span class="t" style="left:856.0px;top:432px;font-size:12px;line-height:14px;height:14px;color:#555555;font-weight:700;letter-spacing:0.08px;">Address</span><span class="t" style="left:856.0px;top:456px;font-size:12px;line-height:14px;height:14px;color:#555555;font-weight:700;letter-spacing:0.11px;">City</span><span class="t" style="left:856.0px;top:480px;font-size:12px;line-height:14px;height:14px;color:#555555;font-weight:700;letter-spacing:-0.70px;">ST</span><span class="t" style="left:856.0px;top:504px;font-size:12px;line-height:14px;height:14px;color:#555555;font-weight:700;">Zip</span><span class="t" style="left:216.2px;top:329px;font-size:11.5px;line-height:12px;height:12px;color:#444;">1</span><span class="t" style="left:288.5px;top:327px;font-size:14px;line-height:16px;height:16px;color:#444;">*</span><span class="t" style="left:444.8px;top:336px;font-size:14px;line-height:16px;height:16px;color:#444;">*</span><span class="t" style="left:526.3px;top:318px;font-size:11.5px;line-height:12px;height:12px;color:#444;">1</span><span class="t" style="left:367.2px;top:420px;font-size:14px;line-height:16px;height:16px;color:#444;">*</span><span class="t" style="left:798.7px;top:390px;font-size:11.5px;line-height:12px;height:12px;color:#444;">1</span><span class="t" style="left:885.5px;top:576px;font-size:12px;line-height:14px;height:14px;color:#e6f2ea;letter-spacing:-0.33px;">Display</span>
</body></html>
